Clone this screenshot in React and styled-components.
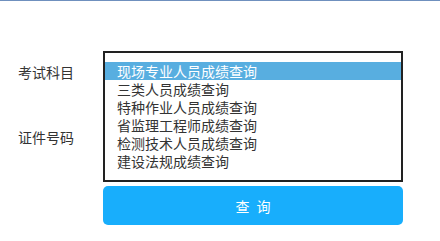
import React, { useState } from "react";
import styled, { createGlobalStyle } from "styled-components";

const subjects = [
    "现场专业人员成绩查询",
    "三类人员成绩查询",
    "特种作业人员成绩查询",
    "省监理工程师成绩查询",
    "检测技术人员成绩查询",
    "建设法规成绩查询",
];

export default function App() {
    const [selected, setSelected] = useState(0);

    return (
        <>
            <GlobalStyle />
            <Page>
                <Form>
                    <Row>
                        <Label>考试科目</Label>
                        <Field>
                            <Trigger>{subjects[selected]}</Trigger>
                            <Dropdown>
                                {subjects.map((s, i) => (
                                    <Option key={s} active={i === selected} onClick={() => setSelected(i)}>
                                        {s}
                                    </Option>
                                ))}
                            </Dropdown>
                        </Field>
                    </Row>
                    <Row>
                        <Label>证件号码</Label>
                        <Field>
                            <Input type="text" />
                        </Field>
                    </Row>
                    <Row h={39}>
                        <span />
                        <Button>查 询</Button>
                    </Row>
                </Form>
            </Page>
        </>
    );
}

const GlobalStyle = createGlobalStyle`
    body {
        margin: 0;
        background: #ffffff;
        font-family: "Noto Sans CJK SC", "Noto Sans", sans-serif;
    }
`;

const Page = styled.div`
    width: 440px;
    height: 241px;
    border-top: 1px solid #6f90be;
    box-sizing: border-box;
    overflow: hidden;
`;

const Form = styled.div`
    padding-top: 55px;
    display: flex;
    flex-direction: column;
    gap: 33px;
`;

const Row = styled.div`
    display: grid;
    grid-template-columns: 103px 300px;
    align-items: center;
    height: ${p => p.h || 32}px;
`;

const Label = styled.div`
    padding-left: 18px;
    font-size: 14px;
    line-height: 18px;
    color: #333333;
`;

const Field = styled.div`
    position: relative;
    height: 32px;
`;

const Trigger = styled.div`
    height: 32px;
    box-sizing: border-box;
    border: 1px solid #cccccc;
    padding: 0 12px;
    font-size: 14px;
    line-height: 30px;
    color: #333333;
`;

const Input = styled.input`
    width: 100%;
    height: 32px;
    box-sizing: border-box;
    border: 1px solid #cccccc;
    outline: none;
`;

const Dropdown = styled.div`
    position: absolute;
    top: -5px;
    left: 0;
    width: 300px;
    box-sizing: border-box;
    border: 2px solid #222222;
    background: #ffffff;
    padding: 9px 0 10px;
    z-index: 2;
`;

const Option = styled.div`
    height: 18px;
    padding-left: 12px;
    font-size: 14px;
    line-height: 18px;
    color: ${p => (p.active ? "#ffffff" : "#333333")};
    background: ${p => (p.active ? "#58aee0" : "transparent")};
    cursor: default;
    white-space: nowrap;
`;

const Button = styled.div`
    height: 39px;
    display: flex;
    align-items: center;
    justify-content: center;
    padding-left: 2px;
    background: #18aefc;
    border-radius: 5px;
    font-size: 14px;
    color: #ffffff;
    letter-spacing: 2px;
`;
